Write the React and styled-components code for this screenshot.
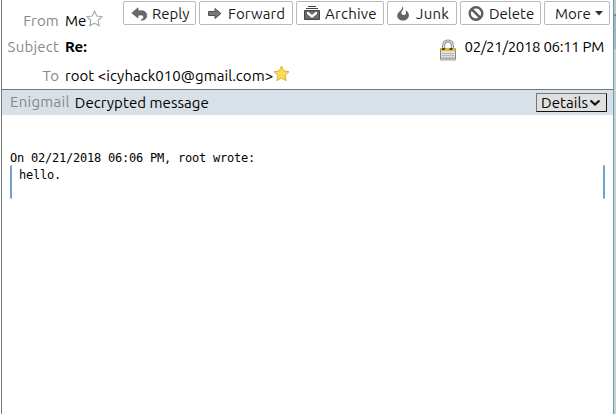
import React from 'react';
import styled, { createGlobalStyle } from 'styled-components';

const Global = createGlobalStyle`
  * { box-sizing: border-box; }
  body { margin: 0; background: #fff; overflow: hidden; }
`;

const Page = styled.div`
  width: 616px;
  height: 414px;
  display: grid;
  grid-template-columns: 1px 1px 611px 1px 2px;
  font: 15px/20px Ubuntu, "Noto Sans", sans-serif;
  color: #000;
`;
const Gutter = styled.div`background: ${p => p.$c};`;
const RightEdge = styled.div`
  background: linear-gradient(#c4c4c4 0 14px, #888 14px 16px, #b0b1b9 16px 49px, #d0d0d0 49px);
`;
const Mail = styled.main`
  display: flex;
  flex-direction: column;
  background: #fff;
  min-width: 0;
`;
const Header = styled.header`
  height: 89px;
  display: flex;
  flex-direction: column;
`;
const Row = styled.div`
  display: flex;
  height: ${p => p.$h}px;
  align-items: flex-start;
  padding-top: ${p => p.$top || 0}px;
`;
const Text = styled.span`
  white-space: pre;
  letter-spacing: ${p => p.$ls || 0}px;
  font-weight: ${p => (p.$bold ? 700 : 400)};
`;
const Label = styled(Text)`
  width: 57px;
  margin-right: 6px;
  text-align: right;
  color: #888a85;
  flex: none;
`;
const Star = styled.svg`
  width: 17px;
  height: 17px;
  margin-top: ${p => p.$top}px;
  flex: none;
`;
const Toolbar = styled.div`
  display: flex;
  gap: 3px;
  margin-left: auto;
  margin-right: 3px;
  margin-top: -10px;
`;
const Button = styled.button`
  width: ${p => p.$w}px;
  height: 24px;
  padding: 1px 0 0 ${p => p.$pl || 7}px;
  display: flex;
  align-items: center;
  gap: ${p => p.$gap || 4}px;
  border: 1px solid #b9b9b9;
  border-radius: 2px;
  background: #fff;
  color: #1a1a1a;
  font: inherit;
  svg { flex: none; }
`;
const Stamp = styled.div`
  display: flex;
  margin-left: auto;
  margin-right: 9px;
  gap: 7px;
`;
const Lock = styled.svg`
  width: 18px;
  height: 22px;
  margin: 2px 1px 0 -1px;
`;
const StatusBar = styled.div`
  height: 26px;
  border-top: 1px solid #6f7880;
  background: #d8e0e8;
  display: flex;
  align-items: flex-start;
  padding: 2px 6px 0 8px;
`;
const StatusLabel = styled(Text)`
  color: #888a85;
  margin-right: 5px;
`;
const StatusText = styled(Text)`
  padding-top: 1px;
`;
const Details = styled.button`
  margin: 1px 0 0 auto;
  width: 71px;
  height: 19px;
  display: flex;
  align-items: center;
  gap: 1px;
  padding: 0 0 0 4px;
  border: 1px solid #111;
  border-top-color: #777;
  border-left-color: #777;
  background: #e0e0e0;
  font: inherit;
  color: #000;
  svg { flex: none; }
`;
const Body = styled.article`
  padding: 35px 8px 0;
  font: 12px/17px "DejaVu Sans Mono", monospace;
`;
const Line = styled.div`
  height: 15px;
  letter-spacing: -0.224px;
  white-space: pre;
`;
const Quote = styled.blockquote`
  margin: 0;
  height: 34px;
  padding: 2px 0 0 7px;
  border: solid #729fcf;
  border-width: 0 2px;
  border-radius: 2px;
  letter-spacing: -0.224px;
`;

const starPath = 'M8.5 1.2 10.8 6 16 6.7 12.2 10.3 13.1 15.6 8.5 13.1 3.9 15.6 4.8 10.3 1 6.7 6.2 6Z';

const ReplyIcon = () => (
  <svg width="17" height="16" viewBox="0 0 17 16">
    <path d="M.8 7 7 1.800v3h3.500c3.500 0 5.200 2.100 5.200 4.700 0 2.200-1.100 3.600-3 4.500H10c1.700-.7 2.600-1.800 2.600-3 0-1.400-1-1.900-2.500-1.900H7v2.900Z" fill="#696969" stroke="#505050" strokeWidth=".6" />
  </svg>
);
const ForwardIcon = () => (
  <svg width="16" height="16" viewBox="0 0 16 16">
    <path d="M1.500 5.500H8V2.500L14 7.500l-6 5V9.500H1.500Z" fill="#777" stroke="#505050" />
  </svg>
);
const ArchiveIcon = () => (
  <svg width="16" height="16" viewBox="0 0 16 16">
    <path d="M4 .5h8M2 2.500h12" stroke="#444" />
    <path d="M.5 4.500h15v9H.5Z" fill="#696969" stroke="#444" />
    <path d="M3 6h10v2l-5 4-5-4Z" fill="#fff" />
    <path d="m4.500 6 3.500 3 3.500-3Z" fill="#696969" />
  </svg>
);
const JunkIcon = () => (
  <svg width="16" height="16" viewBox="0 0 16 16">
    <path d="M7.500.3C9.200 2.500 7.700 4 6.700 5.500c-.9 1.600 0 3.500 2 3.500 2.200 0 3-2.300 1.800-4.800C13 5.500 14.200 7.500 13.900 9.700 13.500 12.500 11 14.500 8 14.500s-5.800-2-5.800-4.800C2.200 6 7.300 5 7.500.3Z" fill="#646464" />
  </svg>
);
const DeleteIcon = () => (
  <svg width="16" height="16" viewBox="0 0 16 16">
    <circle cx="8" cy="7.500" r="6.300" fill="none" stroke="#5c5c5c" strokeWidth="2.400" />
    <path d="m3.600 3.100 8.800 8.800" stroke="#5c5c5c" strokeWidth="2.600" />
  </svg>
);

export default function App() {
  return (
    <Page>
      <Global />
      <Gutter $c="#fff" />
      <Gutter $c="#77787a" />
      <Mail>
        <Header>
          <Row $h={37} $top={11}>
            <Label $ls={0.2}>From</Label>
            <Text>Me</Text>
            <Star $top={-1} viewBox="0 0 17 17"><path d={starPath} fill="#fff" stroke="#aaa" strokeWidth="1.200" /></Star>
            <Toolbar>
              <Button $w={73}><ReplyIcon /><Text>Reply</Text></Button>
              <Button $w={94} $gap={5}><ForwardIcon /><Text $ls={0.1}>Forward</Text></Button>
              <Button $w={88} $gap={5}><ArchiveIcon /><Text $ls={0.25}>Archive</Text></Button>
              <Button $w={70} $gap={5}><JunkIcon /><Text $ls={0.25}>Junk</Text></Button>
              <Button $w={81} $gap={5}><DeleteIcon /><Text>Delete</Text></Button>
              <Button $w={66} $pl={10}><Text>More</Text><svg width="8" height="5"><path d="M0 0h8L4 4.500Z" fill="#333" /></svg></Button>
            </Toolbar>
          </Row>
          <Row $h={29}>
            <Label $ls={0.2}>Subject</Label>
            <Text $bold>Re:</Text>
            <Stamp>
              <Lock viewBox="0 0 18 22">
                <path d="M4.700 11V6.500C4.700 3.500 6 2 9 2s4.300 1.500 4.300 4.500V11" fill="none" stroke="#868686" strokeWidth="3" />
                <path d="M4.700 10V6.500C4.700 3.500 6 2 9 2s4.300 1.500 4.300 4.500V10" fill="none" stroke="#e4e4e4" strokeWidth="1.200" />
                <path d="M1.500 9.500h15v10.500h-15Z" fill="#dedede" stroke="#85857d" />
                <path d="M1.500 9h15v3h-15Z" fill="#d6bd3b" />
                <path d="M3.500 9h3l-1 2h-3ZM11 9h3l-1 2h-3Z" fill="#4b4625" />
                <path d="M3 14.500h12M3 16.500h12M3 18.500h12" stroke="#bbb" />
                <path d="M1 21h16" stroke="#aaa" />
              </Lock>
              <Text $ls={-0.3}>02/21/2018 06:11 PM</Text>
            </Stamp>
          </Row>
          <Row $h={23}>
            <Label>To</Label>
            <Text $ls={0.04}>{'root <icyhack010@gmail.com>'}</Text>
            <Star $top={-1} viewBox="0 0 17 17"><path d={starPath} fill="#fbdc55" stroke="#e0ad35" /></Star>
          </Row>
        </Header>
        <StatusBar>
          <StatusLabel $ls={0.28}>Enigmail</StatusLabel>
          <StatusText $ls={0.06}>Decrypted message</StatusText>
          <Details><Text $ls={0.1}>Details</Text><svg width="13" height="8"><path d="m1.500 1.500 4.500 4 4.500-4" fill="none" stroke="#111" strokeWidth="2.200" /></svg></Details>
        </StatusBar>
        <Body>
          <Line>On 02/21/2018 06:06 PM, root wrote:</Line>
          <Quote>hello.</Quote>
        </Body>
      </Mail>
      <Gutter $c="#5f9fc4" />
      <RightEdge />
    </Page>
  );
}
